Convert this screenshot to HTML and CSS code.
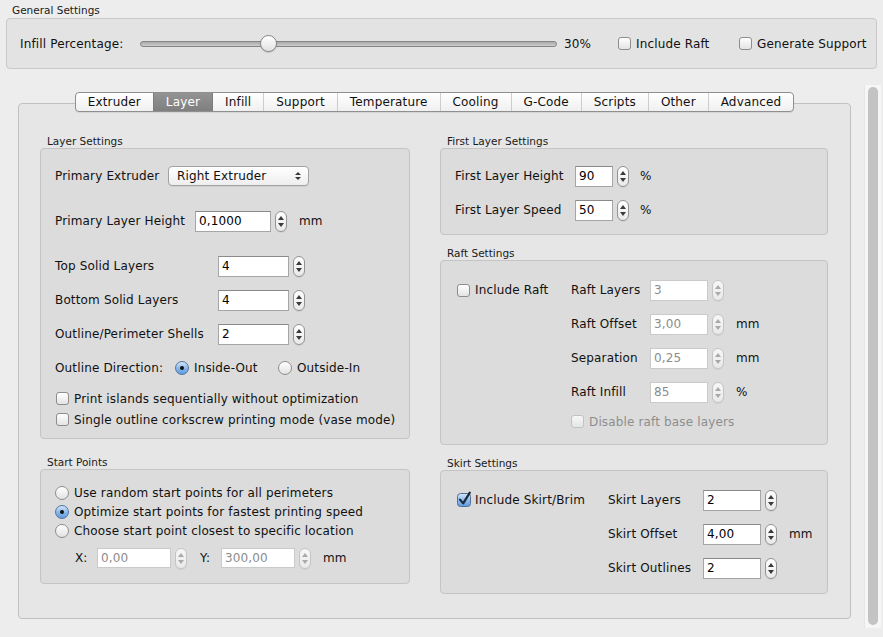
FILE: index.html
```html
<!DOCTYPE html>
<html lang="en">
<head>
    <meta charset="UTF-8">
    <title>Print Settings</title>
    <link rel="stylesheet" href="styles.css">
</head>
<body>

    <div class="top">
        <div class="group-title">General Settings</div>
        <div class="general">
            <span class="general-label">Infill Percentage:</span>
            <div class="slider"><span class="slider-knob" style="--value: 0.3"></span></div>
            <span class="percent">30%</span>
            <label class="check include-raft"><span class="checkbox"></span>Include Raft</label>
            <label class="check"><span class="checkbox"></span>Generate Support</label>
        </div>
    </div>

    <div class="main">
        <div class="content">
            <div class="tabs">
                <div class="tab-bar">
                    <span class="tab">Extruder</span>
                    <span class="tab active">Layer</span>
                    <span class="tab">Infill</span>
                    <span class="tab">Support</span>
                    <span class="tab">Temperature</span>
                    <span class="tab">Cooling</span>
                    <span class="tab">G-Code</span>
                    <span class="tab">Scripts</span>
                    <span class="tab">Other</span>
                    <span class="tab">Advanced</span>
                </div>
            </div>

            <div class="pane">
                <div class="column left">
                    <div class="group-title">Layer Settings</div>
                    <div class="box layer-box">
                        <div class="row">
                            <span class="label extruder-label">Primary Extruder</span>
                            <span class="combo">Right Extruder<span class="updown"><i class="up"></i><i class="down"></i></span></span>
                        </div>
                        <div class="row spaced">
                            <span class="label height-label">Primary Layer Height</span>
                            <span class="field long">0,1000</span>
                            <span class="spin"><i class="up"></i><i class="down"></i></span>
                            <span class="unit">mm</span>
                        </div>
                        <div class="row spaced">
                            <span class="label solid-label">Top Solid Layers</span>
                            <span class="field medium">4</span>
                            <span class="spin"><i class="up"></i><i class="down"></i></span>
                        </div>
                        <div class="row">
                            <span class="label solid-label">Bottom Solid Layers</span>
                            <span class="field medium">4</span>
                            <span class="spin"><i class="up"></i><i class="down"></i></span>
                        </div>
                        <div class="row">
                            <span class="label solid-label">Outline/Perimeter Shells</span>
                            <span class="field medium">2</span>
                            <span class="spin"><i class="up"></i><i class="down"></i></span>
                        </div>
                        <div class="row">
                            <span class="label direction-label">Outline Direction:</span>
                            <label class="check direction-item"><span class="radio on"></span>Inside-Out</label>
                            <label class="check"><span class="radio"></span>Outside-In</label>
                        </div>
                        <div class="check-row first">
                            <label class="check"><span class="checkbox"></span>Print islands sequentially without optimization</label>
                        </div>
                        <div class="check-row">
                            <label class="check"><span class="checkbox"></span>Single outline corkscrew printing mode (vase mode)</label>
                        </div>
                    </div>

                    <div class="group-title start-title">Start Points</div>
                    <div class="box start-box">
                        <label class="check radio-row"><span class="radio"></span>Use random start points for all perimeters</label>
                        <label class="check radio-row"><span class="radio on"></span>Optimize start points for fastest printing speed</label>
                        <label class="check radio-row"><span class="radio"></span>Choose start point closest to specific location</label>
                        <div class="row xy-row">
                            <span class="label x-label">X:</span>
                            <span class="field xy disabled">0,00</span>
                            <span class="spin disabled"><i class="up"></i><i class="down"></i></span>
                            <span class="label y-label">Y:</span>
                            <span class="field xy disabled">300,00</span>
                            <span class="spin disabled"><i class="up"></i><i class="down"></i></span>
                            <span class="unit">mm</span>
                        </div>
                    </div>
                </div>

                <div class="column right">
                    <div class="group-title">First Layer Settings</div>
                    <div class="box first-box">
                        <div class="row">
                            <span class="label first-label">First Layer Height</span>
                            <span class="field short">90</span>
                            <span class="spin"><i class="up"></i><i class="down"></i></span>
                            <span class="unit narrow">%</span>
                        </div>
                        <div class="row">
                            <span class="label first-label">First Layer Speed</span>
                            <span class="field short">50</span>
                            <span class="spin"><i class="up"></i><i class="down"></i></span>
                            <span class="unit narrow">%</span>
                        </div>
                    </div>

                    <div class="group-title next-title">Raft Settings</div>
                    <div class="box raft-box">
                        <div class="toggle-col raft-toggle">
                            <label class="check row"><span class="checkbox"></span>Include Raft</label>
                        </div>
                        <div class="rows">
                            <div class="row">
                                <span class="label raft-label">Raft Layers</span>
                                <span class="field small disabled">3</span>
                                <span class="spin disabled"><i class="up"></i><i class="down"></i></span>
                            </div>
                            <div class="row">
                                <span class="label raft-label">Raft Offset</span>
                                <span class="field small disabled">3,00</span>
                                <span class="spin disabled"><i class="up"></i><i class="down"></i></span>
                                <span class="unit">mm</span>
                            </div>
                            <div class="row">
                                <span class="label raft-label">Separation</span>
                                <span class="field small disabled">0,25</span>
                                <span class="spin disabled"><i class="up"></i><i class="down"></i></span>
                                <span class="unit">mm</span>
                            </div>
                            <div class="row">
                                <span class="label raft-label">Raft Infill</span>
                                <span class="field small disabled">85</span>
                                <span class="spin disabled"><i class="up"></i><i class="down"></i></span>
                                <span class="unit">%</span>
                            </div>
                            <div class="check-row raft-base">
                                <label class="check disabled"><span class="checkbox"></span>Disable raft base layers</label>
                            </div>
                        </div>
                    </div>

                    <div class="group-title next-title">Skirt Settings</div>
                    <div class="box skirt-box">
                        <div class="toggle-col skirt-toggle">
                            <label class="check row">
                                <svg class="checked" width="16" height="16" viewBox="0 0 16 16">
                                    <defs>
                                        <linearGradient id="blue" x1="0" y1="0" x2="0" y2="1">
                                            <stop offset="0" stop-color="#d6e8fa"/>
                                            <stop offset="0.5" stop-color="#8fbcec"/>
                                            <stop offset="1" stop-color="#5d9be0"/>
                                        </linearGradient>
                                    </defs>
                                    <rect x="0.5" y="2.5" width="13" height="13" rx="3" fill="url(#blue)" stroke="#4f6f93"/>
                                    <path d="M3 8.6 L6.2 12.4 L12.8 1.6" fill="none" stroke="#1b2a3c" stroke-width="2.2" stroke-linecap="round" stroke-linejoin="round"/>
                                </svg>Include Skirt/Brim
                            </label>
                        </div>
                        <div class="rows">
                            <div class="row">
                                <span class="label skirt-label">Skirt Layers</span>
                                <span class="field small">2</span>
                                <span class="spin"><i class="up"></i><i class="down"></i></span>
                            </div>
                            <div class="row">
                                <span class="label skirt-label">Skirt Offset</span>
                                <span class="field small">4,00</span>
                                <span class="spin"><i class="up"></i><i class="down"></i></span>
                                <span class="unit">mm</span>
                            </div>
                            <div class="row">
                                <span class="label skirt-label">Skirt Outlines</span>
                                <span class="field small">2</span>
                                <span class="spin"><i class="up"></i><i class="down"></i></span>
                            </div>
                        </div>
                    </div>
                </div>
            </div>
        </div>

        <div class="scrollbar"><span class="thumb"></span></div>
    </div>

</body>
</html>
```

FILE: styles.css
```css
body {
    margin: 0;
    background: #ededed;
    font-family: "DejaVu Sans", "Noto Sans", sans-serif;
    font-size: 12px;
    letter-spacing: 0.15px;
    color: #111;
}

.top {
    padding: 3px 6px 0;
}

.group-title {
    font-size: 10.5px;
    letter-spacing: 0;
    line-height: 14px;
    height: 14px;
    padding-left: 7px;
    color: #1a1a1a;
}

.top .group-title {
    padding-left: 6px;
    margin-bottom: 1px;
}

.general {
    display: flex;
    align-items: center;
    height: 51px;
    box-sizing: border-box;
    padding-left: 13px;
    border: 1px solid #c9c9c9;
    border-radius: 4px;
    background: #e3e3e3;
}

.general-label {
    width: 120px;
}

.slider {
    position: relative;
    width: 417px;
    height: 16px;
}

.slider::before {
    content: "";
    position: absolute;
    left: 0;
    right: 0;
    top: 5px;
    height: 4px;
    border: 1px solid #868686;
    border-radius: 3px;
    background: linear-gradient(#aaaaaa, #cccccc);
}

.slider-knob {
    position: absolute;
    top: -1px;
    left: calc(var(--value) * (100% - 17px));
    width: 15px;
    height: 15px;
    border: 1px solid #858585;
    border-radius: 50%;
    background: linear-gradient(#ffffff, #e2e2e2);
    box-shadow: 0 1px 1px rgba(0, 0, 0, 0.15);
}

.percent {
    width: 61px;
    padding-left: 7px;
    box-sizing: border-box;
}

.check {
    display: flex;
    align-items: center;
    white-space: nowrap;
}

.include-raft {
    width: 121px;
}

.checkbox {
    width: 13px;
    height: 13px;
    box-sizing: border-box;
    margin-right: 5px;
    border: 1px solid #8d8d8d;
    border-radius: 3px;
    background: linear-gradient(#ffffff, #e4e4e4);
    flex-shrink: 0;
}

.checked {
    margin: -3px 2px 0 0;
    flex-shrink: 0;
}

.check.disabled {
    color: #8e8e8e;
}

.check.disabled .checkbox {
    border-color: #c2c2c2;
    background: linear-gradient(#f6f6f6, #e6e6e6);
}

.radio {
    width: 14px;
    height: 14px;
    box-sizing: border-box;
    margin-right: 5px;
    border: 1px solid #8d8d8d;
    border-radius: 50%;
    background: linear-gradient(#ffffff, #e2e2e2);
    display: flex;
    align-items: center;
    justify-content: center;
    flex-shrink: 0;
}

.radio.on {
    border-color: #52759c;
    background: linear-gradient(#d3e6fa, #86b6ea 55%, #5f9ce0);
}

.radio.on::after {
    content: "";
    width: 4px;
    height: 4px;
    border-radius: 50%;
    background: #111;
}

/* scroll area */

.main {
    display: flex;
    height: 543px;
    margin-top: 16px;
}

.content {
    flex: 1;
    padding: 7px 13px 0 18px;
}

.scrollbar {
    display: flex;
    width: 17px;
    margin-right: 2px;
    padding: 2px 3px 3px;
    box-sizing: border-box;
    background: #f6f6f6;
    border-left: 1px solid #e6e6e6;
}

.thumb {
    flex: 1;
    border-radius: 5px;
    background: #c3c3c3;
}

.tabs {
    display: flex;
    justify-content: center;
    position: relative;
    z-index: 1;
    margin-bottom: -9px;
}

.tab-bar {
    display: flex;
    height: 20px;
    box-sizing: border-box;
    border: 1px solid #8f8f8f;
    border-radius: 4px;
    overflow: hidden;
    background: linear-gradient(#ffffff, #f0f0f0);
    box-shadow: 0 1px 1px rgba(0, 0, 0, 0.08);
}

.tab {
    padding: 0 12px;
    line-height: 18px;
    border-left: 1px solid #cdcdcd;
}

.tab:first-child {
    border-left: none;
}

.tab.active {
    color: #fff;
    border-left-color: #7d7d7d;
    background: linear-gradient(#939393, #7f7f7f);
}

.tab.active + .tab {
    border-left-color: #7d7d7d;
}

.pane {
    display: flex;
    gap: 30px;
    height: 516px;
    box-sizing: border-box;
    padding: 30px 0 0 21px;
    border: 1px solid #c1c1c1;
    border-radius: 4px;
    background: #e6e6e6;
}

.column.left {
    width: 370px;
}

.column.right {
    width: 388px;
}

.box {
    border: 1px solid #c4c4c4;
    border-radius: 4px;
    background: #dcdcdc;
    padding: 0 14px;
}

.start-title {
    margin-top: 16px;
}

.next-title {
    margin-top: 11px;
}

.row {
    display: flex;
    align-items: center;
    height: 34px;
}

.row.spaced {
    margin-top: 11px;
}

.check-row {
    display: flex;
    align-items: center;
    height: 21px;
    padding-left: 1px;
}

.check-row.first {
    margin-top: 3px;
}

.check-row.raft-base {
    margin-top: 2px;
    padding-left: 0;
}

.label {
    white-space: nowrap;
    flex-shrink: 0;
}

.extruder-label { width: 113px; }
.height-label { width: 140px; }
.solid-label { width: 163px; }
.direction-label { width: 120px; }
.direction-item { width: 103px; }
.first-label { width: 120px; }
.raft-label { width: 79px; }
.skirt-label { width: 95px; }
.x-label { width: 22px; }
.y-label { width: 21px; margin-left: 13px; }

.combo {
    display: flex;
    align-items: center;
    justify-content: space-between;
    width: 141px;
    height: 20px;
    box-sizing: border-box;
    padding: 0 7px 0 8px;
    border: 1px solid #a2a2a2;
    border-radius: 4px;
    background: linear-gradient(#ffffff, #eeeeee);
    box-shadow: 0 1px 0 rgba(0, 0, 0, 0.06);
}

.updown {
    display: flex;
    flex-direction: column;
    gap: 2px;
}

.up, .down {
    display: block;
    width: 0;
    height: 0;
    border-left: 3px solid transparent;
    border-right: 3px solid transparent;
}

.up {
    border-bottom: 4px solid #3a3a3a;
}

.down {
    border-top: 4px solid #3a3a3a;
}

.updown .up { border-bottom-width: 3.5px; }
.updown .down { border-top-width: 3.5px; }

.field {
    height: 21px;
    box-sizing: border-box;
    padding: 0 3px;
    line-height: 19px;
    border: 1px solid #a6a6a6;
    border-top-color: #8a8a8a;
    background: #fff;
    color: #000;
    flex-shrink: 0;
}

.field.long { width: 76px; }
.field.medium { width: 71px; }
.field.short { width: 38px; }
.field.small { width: 58px; }
.field.xy { width: 74px; height: 20px; line-height: 18px; }

.field.disabled {
    border-color: #cacaca;
    color: #8c8c8c;
}

.spin {
    display: flex;
    flex-direction: column;
    align-items: center;
    justify-content: center;
    gap: 3px;
    width: 12px;
    height: 21px;
    box-sizing: border-box;
    margin-left: 4px;
    border: 1px solid #939393;
    border-radius: 6px;
    background: linear-gradient(#ffffff, #e9e9e9);
    box-shadow: 0 1px 0 rgba(0, 0, 0, 0.06);
    flex-shrink: 0;
}

.spin.disabled {
    border-color: #c4c4c4;
    background: linear-gradient(#f7f7f7, #e9e9e9);
}

.spin.disabled .up { border-bottom-color: #a9a9a9; }
.spin.disabled .down { border-top-color: #a9a9a9; }

.unit {
    margin-left: 12px;
}

.unit.narrow {
    margin-left: 11px;
}

/* group boxes */

.layer-box {
    padding-top: 10px;
    padding-bottom: 8px;
}

.start-box {
    padding-top: 13px;
    padding-bottom: 8px;
}

.radio-row {
    height: 19px;
}

.xy-row {
    margin-top: 1px;
    padding-left: 20px;
}

.first-box {
    padding-top: 10px;
    padding-bottom: 7px;
}

.raft-box, .skirt-box {
    display: flex;
    padding-top: 12px;
}

.raft-box {
    padding-bottom: 12px;
}

.skirt-box {
    padding-bottom: 8px;
}

.toggle-col {
    padding-left: 2px;
    box-sizing: border-box;
}

.raft-toggle { width: 116px; }
.skirt-toggle { width: 153px; }
```
